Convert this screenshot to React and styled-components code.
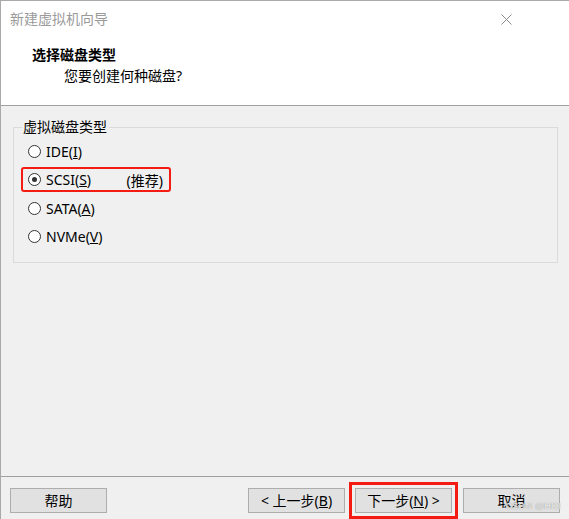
import React from 'react';
import styled, { createGlobalStyle } from 'styled-components';

const GlobalStyle = createGlobalStyle`
  html, body {
    margin: 0;
    padding: 0;
    background: #f0f0f0;
  }
  body {
    font-family: "Noto Sans", "Noto Sans CJK SC", sans-serif;
    color: #000;
  }
`;

const Window = styled.div`
  position: relative;
  display: flex;
  flex-direction: column;
  width: 569px;
  height: 519px;
  box-sizing: border-box;
  border-top: 1px solid #a9a9a9;
  border-left: 1px solid #a9a9a9;
  background: #f0f0f0;
  overflow: hidden;
`;

const TitleBar = styled.div`
  display: flex;
  align-items: center;
  justify-content: space-between;
  height: 36px;
  padding: 0 57px 0 9px;
  background: #fff;
  flex-shrink: 0;
`;

const Title = styled.span`
  font-size: 14px;
  color: #9a9a9a;
  line-height: 18px;
`;

const Header = styled.div`
  height: 69px;
  box-sizing: border-box;
  padding: 9px 0 0 31px;
  background: #fff;
  border-bottom: 1px solid #a0a0a0;
  flex-shrink: 0;
`;

const Heading = styled.div`
  font-size: 14px;
  font-weight: 700;
  line-height: 18px;
`;

const SubHeading = styled.div`
  font-size: 14px;
  line-height: 18px;
  margin: 3px 0 0 32px;
`;

const Body = styled.div`
  flex: 1;
  padding: 12px 11px 0 12px;
`;

const GroupBox = styled.fieldset`
  margin: 0;
  height: 145px;
  box-sizing: border-box;
  padding: 3px 0 0 7px;
  border: 1px solid #dadada;
  border-radius: 0;
`;

const Legend = styled.legend`
  margin-left: 1px;
  padding: 0 2px 0 1px;
  font-size: 14px;
  line-height: 18px;
`;

const Options = styled.div`
  display: flex;
  flex-direction: column;
  gap: 3.3px;
`;

const Option = styled.label`
  display: flex;
  align-items: center;
  width: 150px;
  height: 25px;
  box-sizing: border-box;
  padding: 0 6px 0 5px;
  border: 2px solid ${p => (p.$marked ? '#f31b12' : 'transparent')};
  border-radius: 3px;
  font-size: 14px;
`;

const Radio = styled.span`
  position: relative;
  width: 11px;
  height: 11px;
  border: 1px solid #333;
  border-radius: 50%;
  background: #fff;
  margin-right: 5px;
  flex-shrink: 0;

  &::after {
    content: '';
    display: ${p => (p.$checked ? 'block' : 'none')};
    position: absolute;
    left: 3px;
    top: 3px;
    width: 5px;
    height: 5px;
    border-radius: 50%;
    background: #333;
  }
`;

const Note = styled.span`
  margin-left: auto;
`;

const Footer = styled.div`
  display: flex;
  align-items: flex-start;
  height: 43px;
  box-sizing: border-box;
  padding: 11px 9px 0 9px;
  border-top: 1px solid #a0a0a0;
  flex-shrink: 0;
`;

const Button = styled.button`
  width: 97px;
  height: 25px;
  margin: 0 0 0 ${p => p.$gap || 0}px;
  padding: 0;
  background: #e1e1e1;
  border: 1px solid #adadad;
  border-radius: 0;
  font-family: "Noto Sans", "Noto Sans CJK SC", sans-serif;
  font-size: 14px;
  line-height: 18px;
  color: #000;
  outline: ${p => (p.$marked ? '3px solid #f31b12' : 'none')};
  outline-offset: 3px;
`;

const Spacer = styled.div`
  flex: 1;
`;

const Watermark = styled.span`
  position: absolute;
  right: 8px;
  bottom: 8px;
  font-family: "Liberation Sans", Arial, sans-serif;
  font-size: 9px;
  font-weight: 700;
  letter-spacing: 0.3px;
  color: rgba(255, 255, 255, 0.75);
  text-shadow: 0 0 1px rgba(120, 120, 120, 0.9);
`;

const CloseIcon = () => (
  <svg width="11" height="11" viewBox="0 0 11 11">
    <path d="M0.5 0.5L10.5 10.5M10.5 0.5L0.5 10.5" stroke="#8a8a8a" strokeWidth="1" fill="none" />
  </svg>
);

const options = [
  { label: 'IDE', key: 'I' },
  { label: 'SCSI', key: 'S', checked: true, note: '(推荐)' },
  { label: 'SATA', key: 'A' },
  { label: 'NVMe', key: 'V' },
];

const App = () => (
  <>
    <GlobalStyle />
    <Window>
      <TitleBar>
        <Title>新建虚拟机向导</Title>
        <CloseIcon />
      </TitleBar>
      <Header>
        <Heading>选择磁盘类型</Heading>
        <SubHeading>您要创建何种磁盘?</SubHeading>
      </Header>
      <Body>
        <GroupBox>
          <Legend>虚拟磁盘类型</Legend>
          <Options>
            {options.map(o => (
              <Option key={o.label} $marked={o.checked}>
                <Radio $checked={o.checked} />
                <span>
                  {o.label}(<u>{o.key}</u>)
                </span>
                {o.note && <Note>{o.note}</Note>}
              </Option>
            ))}
          </Options>
        </GroupBox>
      </Body>
      <Footer>
        <Button>帮助</Button>
        <Spacer />
        <Button>&lt; 上一步(<u>B</u>)</Button>
        <Button $gap={10} $marked>下一步(<u>N</u>) &gt;</Button>
        <Button $gap={11}>取消</Button>
      </Footer>
      <Watermark>CSDN @HK!</Watermark>
    </Window>
  </>
);

export default App;
